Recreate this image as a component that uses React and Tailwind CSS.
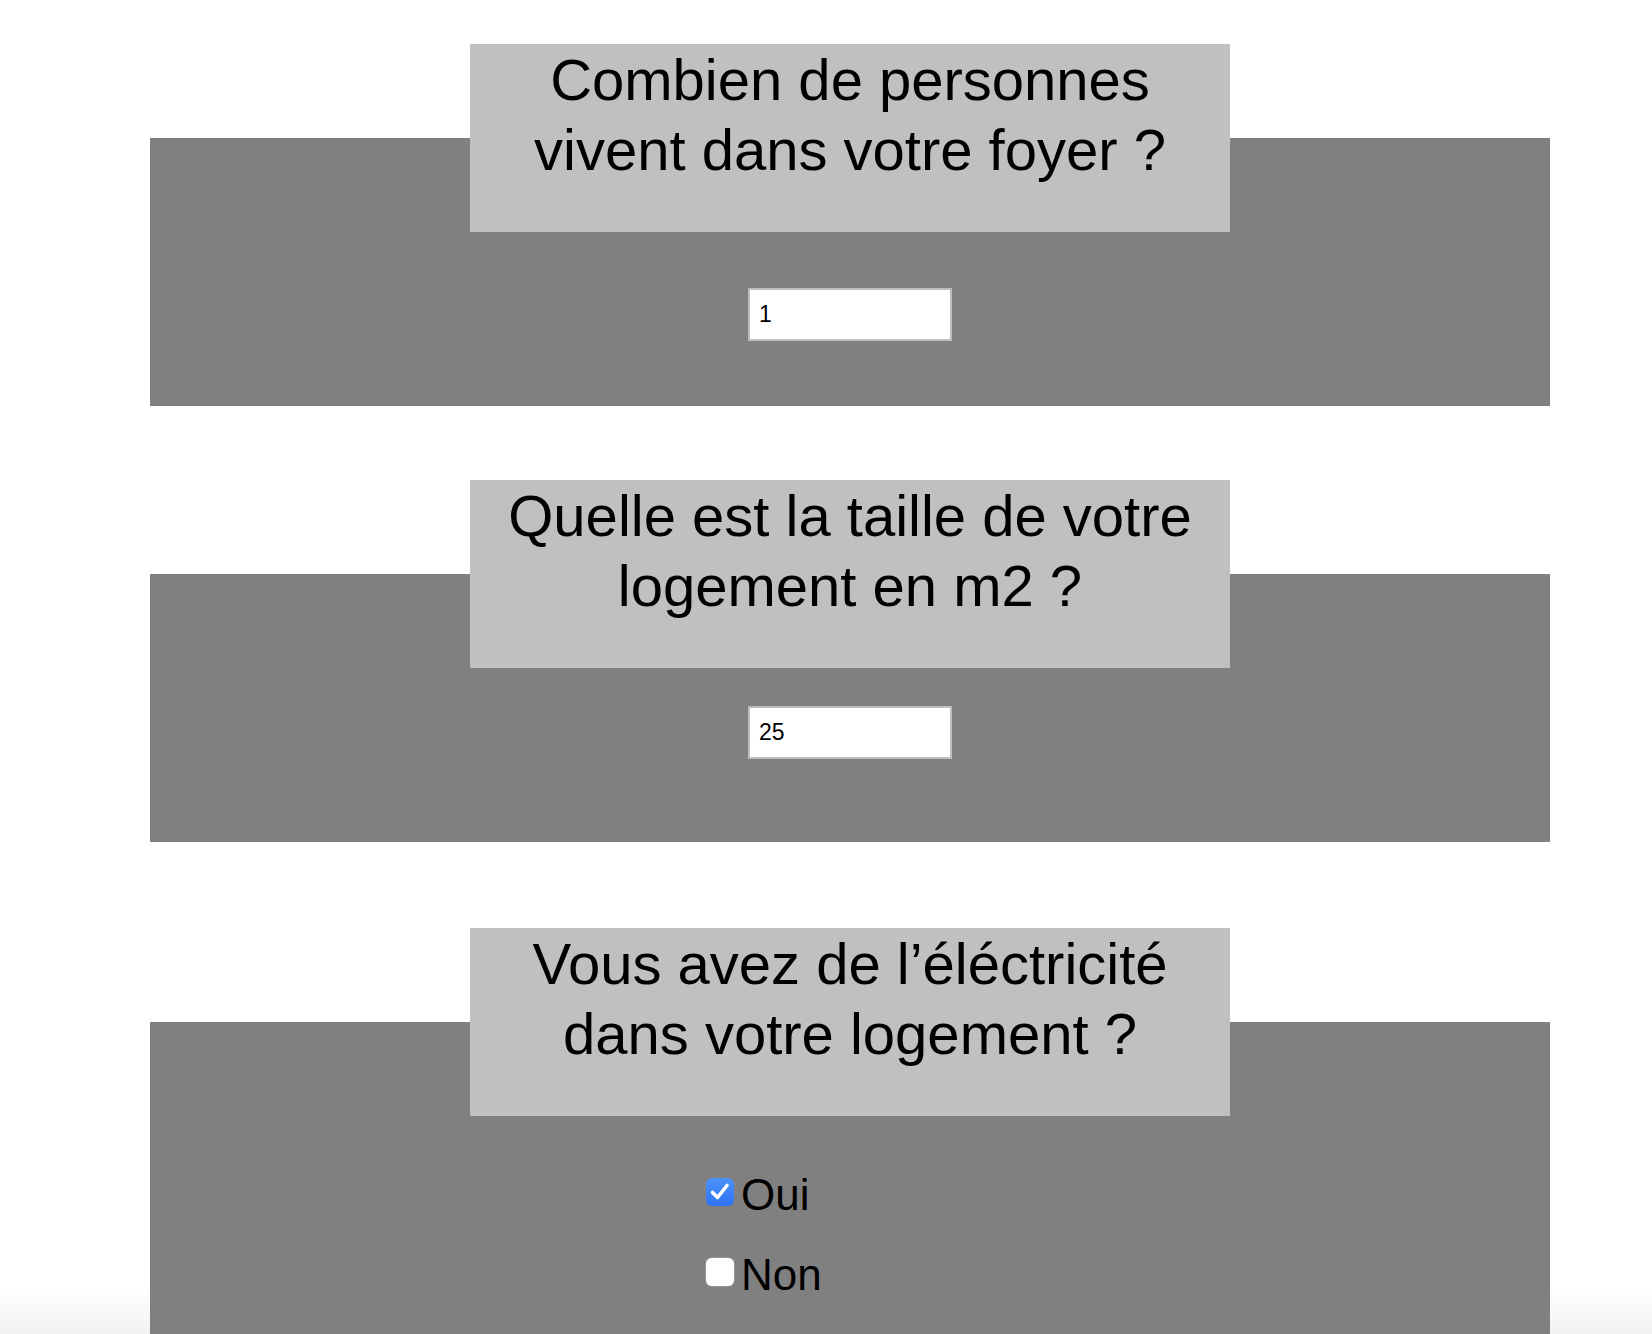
import React, { useState } from 'react';

const Question = ({ title, children, gapTop, panelPad, panelHeight }) => (
    <section className={`w-[1400px] ml-[150px] ${gapTop}`}>
        <div className="relative z-10 mx-auto w-[760px] h-[188px] bg-[#c0c0c0] px-[8px] pt-[1px]">
            <h2 className="text-[58px] leading-[70px] text-center text-black font-normal">{title}</h2>
        </div>
        <div className={`-mt-[94px] bg-[#808080] ${panelPad} ${panelHeight}`}>{children}</div>
    </section>
);

const NumberField = ({ value, onChange }) => (
    <input
        type="text"
        value={value}
        onChange={(e) => onChange(e.target.value)}
        className="block mx-auto w-[204px] h-[53px] bg-white border-2 border-[#bdbdbd] pl-[9px] text-[23px] text-black outline-none"
    />
);

const CheckRow = ({ label, checked, onToggle }) => (
    <label className="flex items-center gap-[7px] h-[52px] cursor-pointer" onClick={onToggle}>
        {checked ? (
            <span className="block w-[28px] h-[28px] mb-[6px] rounded-[6px] bg-[linear-gradient(to_bottom,#4d91f9,#2f74f5)]">
                <svg width="28" height="28" viewBox="0 0 28 28" fill="none">
                    <path d="M6.5 14.5 L11.5 19.5 L21 7.5" stroke="white" strokeWidth="3.6" strokeLinecap="round" strokeLinejoin="round" />
                </svg>
            </span>
        ) : (
            <span className="block w-[28px] h-[28px] mb-[6px] rounded-[6px] bg-white shadow-[0_0_1.5px_rgba(255,255,255,0.8)]" />
        )}
        <span className="text-[44px] leading-[52px] text-black">{label}</span>
    </label>
);

export default function App() {
    const [people, setPeople] = useState('1');
    const [size, setSize] = useState('25');
    const [power, setPower] = useState('oui');

    return (
        <div className="h-[1334px] overflow-hidden pt-[44px] bg-[linear-gradient(to_bottom,#ffffff_1290px,#f2f2f2_1334px)] font-['Liberation_Sans',Arial,sans-serif]">
            <Question
                title="Combien de personnes vivent dans votre foyer ?"
                gapTop="mt-0"
                panelPad="pt-[150px]"
                panelHeight="h-[268px]"
            >
                <NumberField value={people} onChange={setPeople} />
            </Question>

            <Question
                title="Quelle est la taille de votre logement en m2 ?"
                gapTop="mt-[74px]"
                panelPad="pt-[132px]"
                panelHeight="h-[268px]"
            >
                <NumberField value={size} onChange={setSize} />
            </Question>

            <Question
                title="Vous avez de l’éléctricité dans votre logement ?"
                gapTop="mt-[86px]"
                panelPad="pt-[147px]"
                panelHeight="h-[312px]"
            >
                <div className="ml-[556px] flex flex-col gap-[28px]">
                    <CheckRow label="Oui" checked={power === 'oui'} onToggle={() => setPower('oui')} />
                    <CheckRow label="Non" checked={power === 'non'} onToggle={() => setPower('non')} />
                </div>
            </Question>
        </div>
    );
}
